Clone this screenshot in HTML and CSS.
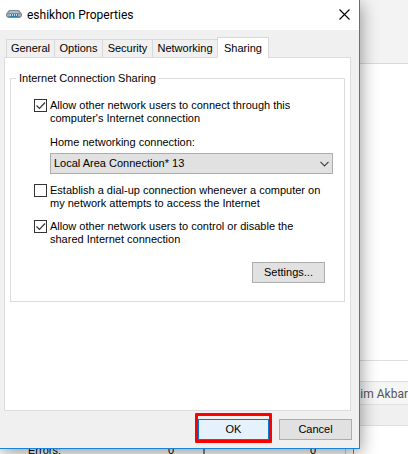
FILE: index.html
```html
<!DOCTYPE html>
<html lang="en">
<head>
<meta charset="utf-8">
<title>eshikhon Properties</title>
<link rel="stylesheet" href="styles.css">
</head>
<body>
<div class="desktop">
  <div class="backdrop-top"></div>
  <div class="backdrop-body"></div>
  <div class="backdrop-strip"></div>
  <div class="backdrop-author">Fahim Akbar</div>
  <div class="backdrop-bar"></div>
  <div class="backdrop-status">
    <span class="status-name">Errors:</span>
    <span class="status-count">0</span>
    <span class="status-count">0</span>
    <span class="status-edge"></span>
  </div>

  <main class="dialog">
    <header class="titlebar">
      <svg class="modem" viewBox="0 0 16 8" aria-hidden="true">
        <path d="M3 0h10l3 4v2l-2 2H2L0 6V4z" fill="#7f8a91"/>
        <path d="M4 1h8l2 2H2z" fill="#b4bbbf"/>
        <path d="M1 4h3v2H1zM12 4h3v2h-3z" fill="#a4acb1"/>
        <path d="M4 4h8v3H4z" fill="#2b7fb0"/>
        <path d="M4 4h1v2H4zM6 4h1v2H6zM8 4h1v2H8zM10 4h1v2h-1z" fill="#b4def3"/>
      </svg>
      <h1 class="title">eshikhon Properties</h1>
      <button class="close" type="button" aria-label="Close">
        <svg viewBox="0 0 11 11" aria-hidden="true"><path d="M.5.5l10 10M10.5.5l-10 10" fill="none" stroke="#000" stroke-width="1.1"/></svg>
      </button>
    </header>

    <div class="content">
      <nav class="tabs" role="tablist">
        <button class="tab" type="button" role="tab">General</button>
        <button class="tab" type="button" role="tab">Options</button>
        <button class="tab" type="button" role="tab">Security</button>
        <button class="tab tab-wide" type="button" role="tab">Networking</button>
        <button class="tab tab-active" type="button" role="tab" aria-selected="true">Sharing</button>
      </nav>

      <section class="panel" role="tabpanel">
        <fieldset class="group">
          <legend>Internet Connection Sharing</legend>
          <div class="option">
            <span class="check">
              <input type="checkbox" id="allow-connect" checked>
              <svg viewBox="0 0 13 13" aria-hidden="true"><path d="M2.500 6.500l3 3 5.500-6"/></svg>
            </span>
            <label for="allow-connect">Allow other network users to connect through this<br>computer's Internet connection</label>
          </div>
          <div class="home">
            <label for="connection">Home networking connection:</label>
            <div class="picker">
              <select id="connection"><option>Local Area Connection* 13</option></select>
              <svg viewBox="0 0 9 6" aria-hidden="true"><path d="M.5.8l4 4 4-4"/></svg>
            </div>
          </div>
          <div class="option">
            <span class="check">
              <input type="checkbox" id="dial-up">
              <svg viewBox="0 0 13 13" aria-hidden="true"><path d="M2.500 6.500l3 3 5.500-6"/></svg>
            </span>
            <label for="dial-up">Establish a dial-up connection whenever a computer on<br>my network attempts to access the Internet</label>
          </div>
          <div class="option">
            <span class="check">
              <input type="checkbox" id="allow-control" checked>
              <svg viewBox="0 0 13 13" aria-hidden="true"><path d="M2.500 6.500l3 3 5.500-6"/></svg>
            </span>
            <label for="allow-control">Allow other network users to control or disable the<br>shared Internet connection</label>
          </div>
          <button class="button settings" type="button">Settings...</button>
        </fieldset>
      </section>

      <footer class="actions">
        <span class="highlight"><button class="button button-default" type="button">OK</button></span>
        <button class="button" type="button">Cancel</button>
      </footer>
    </div>
  </main>
</div>
</body>
</html>
```

FILE: styles.css
```css
* {
  box-sizing: border-box;
}

body {
  margin: 0;
  background: #fff;
  color: #000;
  font: 11px/13px "Liberation Sans", Arial, sans-serif;
}

button,
select {
  font: inherit;
  color: inherit;
}

.desktop {
  position: relative;
  display: flex;
  flex-direction: column;
  height: 100vh;
  overflow: hidden;
}

/* Window behind the dialog */
.backdrop-top {
  height: 64px;
  background: #f3f3f3;
  border-bottom: 1px solid #d9d9d9;
}

.backdrop-body {
  flex: 1;
  border-bottom: 1px solid #dedede;
}

.backdrop-strip {
  height: 21px;
  border-bottom: 1px solid #dedede;
}

.backdrop-author {
  height: 23px;
  background: #f6f6f6;
  border-bottom: 1px solid #e2e2e2;
  color: #555;
  font: 12px/24px Roboto, sans-serif;
  text-align: right;
}

.backdrop-bar {
  height: 21px;
  background: #f0f0f0;
  border-bottom: 1px solid #dedede;
}

.backdrop-status {
  display: grid;
  grid-template-columns: 138px 67px 141px 8px;
  height: 28px;
  line-height: 15px;
  padding-top: 17px;
}

.status-name {
  padding-left: 28px;
}

.status-count {
  padding-right: 29px;
  border-right: 2px solid #888;
  text-align: right;
}

.status-count + .status-count {
  border-right: 1px solid #ccc;
}

.status-edge {
  border-right: 1px solid #888;
}

/* Dialog */
.dialog {
  position: absolute;
  top: 0;
  left: 0;
  right: 48px;
  background: #f0f0f0;
  border-right: 1px solid #1883d7;
  border-bottom: 1px solid #1883d7;
  box-shadow: 1px 4px 16px rgba(0, 0, 0, 0.4);
}

.titlebar {
  display: flex;
  align-items: center;
  height: 30px;
  padding: 0 9px 2px 6px;
  background: #fff;
}

.modem {
  width: 16px;
  height: 8px;
}

.title {
  flex: 1;
  margin: 0 0 0 5px;
  padding-top: 2px;
  font: 12px/16px Roboto, sans-serif;
}

.close {
  display: flex;
  padding: 0;
  background: none;
  border: 0;
}

.close svg {
  width: 11px;
  height: 11px;
}

.content {
  padding: 7px 8px 8px 4px;
}

.tabs {
  display: flex;
  align-items: flex-end;
  padding-left: 2px;
}

.tab {
  flex: 0 0 49px;
  height: 18px;
  margin-right: -1px;
  padding: 0;
  background: #f0f0f0;
  border: 1px solid #d9d9d9;
  border-bottom: 0;
  line-height: 17px;
  white-space: nowrap;
}

.tab-wide {
  flex-basis: 66px;
}

.tab:nth-child(3) {
  flex-basis: 51px;
}

.tab-active {
  z-index: 1;
  flex-basis: 52px;
  height: 21px;
  margin-bottom: -1px;
  background: #fff;
}

.panel {
  height: 354px;
  padding: 14px 5px;
  background: #fff;
  border: 1px solid #dcdcdc;
}

.group {
  display: flex;
  flex-direction: column;
  height: 230px;
  margin: 0;
  padding: 14px 11px 18px 23px;
  border: 1px solid #dcdcdc;
}

.group legend {
  margin-left: -18px;
  padding: 0 3px;
}

.option {
  display: flex;
  gap: 3px;
  margin-bottom: 10px;
}

.option label {
  white-space: nowrap;
}

.check {
  display: grid;
  width: 13px;
  height: 13px;
}

.check input,
.check svg {
  grid-area: 1 / 1;
  width: 13px;
  height: 13px;
  margin: 0;
}

.check input {
  appearance: none;
  background: #fff;
  border: 1px solid #333;
}

.check svg {
  visibility: hidden;
  pointer-events: none;
  fill: none;
  stroke: #333;
  stroke-width: 1.2;
}

.check input:checked + svg {
  visibility: visible;
}

.home {
  margin: 1px 0 10px 16px;
}

.picker {
  display: grid;
  align-items: center;
  margin-top: 4px;
}

.picker select,
.picker svg {
  grid-area: 1 / 1;
}

.picker select {
  appearance: none;
  width: 100%;
  height: 21px;
  padding: 0 3px;
  background: #e1e1e1;
  border: 1px solid #adadad;
  border-radius: 0;
}

.picker svg {
  justify-self: end;
  width: 9px;
  height: 6px;
  margin-right: 4px;
  pointer-events: none;
  fill: none;
  stroke: #444;
  stroke-width: 1.2;
}

.button {
  width: 73px;
  height: 21px;
  padding: 0;
  background: #e1e1e1;
  border: 1px solid #adadad;
}

.settings {
  margin: auto 8px 0 auto;
}

.actions {
  display: flex;
  justify-content: flex-end;
  align-items: flex-end;
  gap: 7px;
  height: 29px;
  margin-right: -1px;
}

.highlight {
  display: flex;
  width: 77px;
  margin-bottom: -3px;
  padding-top: 3px;
  border: 3px solid #f00;
  border-radius: 1px;
}

.button-default {
  width: 100%;
  background: #e5f1fb;
  border-color: #0078d7;
}
```
